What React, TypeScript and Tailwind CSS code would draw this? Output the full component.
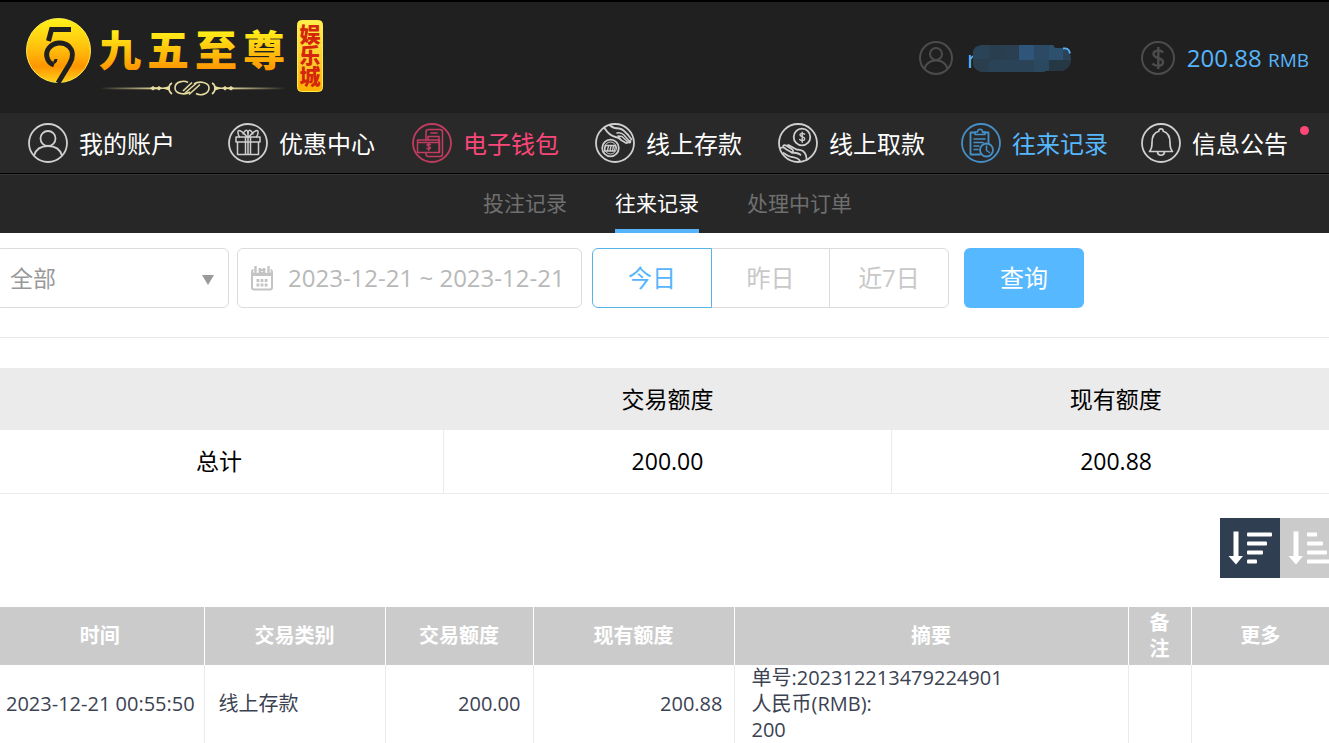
import { useState } from "react";
import type { ReactNode } from "react";
import clsx from "clsx";

function Ring({ children }: { children: ReactNode }) {
  return (
    <svg
      viewBox="0 0 40 40"
      className="size-10 shrink-0"
      fill="none"
      stroke="currentColor"
      strokeWidth="1.5"
      strokeLinecap="round"
      strokeLinejoin="round"
      aria-hidden="true"
    >
      <circle cx="20" cy="20" r="19" strokeWidth="1.8" />
      {children}
    </svg>
  );
}

const UserIcon = () => (
  <Ring>
    <circle cx="20" cy="15.5" r="7.5" strokeWidth="1.8" />
    <path d="M6 32.5c2-6.5 7.500-9.500 14-9.500s12 3 14 9.500" strokeWidth="1.8" />
  </Ring>
);

const GiftIcon = () => (
  <Ring>
    <path d="M8 14h24v5H8zM9.500 19h21v12.500h-21zM17.500 14v17.500M22.500 14v17.500M20 14v17.500" />
    <path d="M19 14c-2-3-6-6.500-8-6.500-1.500 0-1.500 3 .5 6.500M15 11c1-2.500 3-4.500 4-3.500 1 .8 1 3 1 6.500M21 14c2-3 6-6.500 8-6.500 1.500 0 1.500 3-.5 6.500M25 11c-1-2.500-3-4.500-4-3.500-1 .8-1 3-1 6.500" />
  </Ring>
);

const WalletIcon = () => (
  <Ring>
    <path d="M14 17V9c0-1.500 1-2.500 2.500-2.500H28c1.500 0 2.500 1 2.500 2.500v22c0 1.500-1 2.500-2.500 2.500H16.500c-1.500 0-2.500-1-2.500-2.500v-1.500" />
    <path d="M19 10h6M16 17v-3.500h11V29M5.500 17h22v12.500h-22zM5.500 19.500h22" />
    <path d="M18.500 21.500c-1-1-3.500-.8-3.500.6s3.500 1 3.500 2.600-2.500 1.700-3.700.6M16.800 20.500v7" strokeWidth="1.3" />
  </Ring>
);

const DepositIcon = () => (
  <Ring>
    <circle cx="15.500" cy="25" r="8.300" strokeWidth="1.8" />
    <circle cx="15.500" cy="25" r="6" strokeWidth="1" />
    <path d="M10.500 22.500h10l-1 5.500h-10zM13.500 23l-1 4.500M16 23l-1 4.500M18.500 23l-1 4.500" strokeWidth="1.3" />
    <path d="M9.500 5c3 5 6 8 11 9 2 .4 3.500.7 5 2.500M15 2.500c3 2.500 6 3 9 3 4 .2 7 3 12.500 11" strokeWidth="1.8" />
    <path d="M22 10c3-1 5 0 7 2l6.500 7.500M25.500 16.500l-2.500-3.500 4 .5 6.500 6M26 17l5 3c1 .6 2-.2 1.300-1.200M34 19.500c1.500.5 2-.5 1-2" />
  </Ring>
);

const WithdrawIcon = () => (
  <Ring>
    <circle cx="24" cy="14" r="8.300" strokeWidth="1.8" />
    <path d="M26.500 11.300c-1.400-1.500-4.500-1.200-4.500.7s4.700 1.500 4.700 3.700-3.400 2.300-5 .7M24.200 9.200v10" strokeWidth="1.4" />
    <path d="M2.500 25c2-1.500 4-.5 6 1.500l4.500 2.500c2 1 3-1.500 1-2.700L8 22.500c-1.500-1-3.500 0-2.500 1.500M9 22.500l1.500-.5 8 4.500 3 .3c4 .5 7 2.500 7.200 10" strokeWidth="1.8" />
    <path d="M5.500 30c3 1.500 4 3 7 3.700 4 .8 8 .5 9.500 4.500M13.500 29.500c3.500.5 7 .3 9 2.300" strokeWidth="1.8" />
  </Ring>
);

const RecordIcon = () => (
  <Ring>
    <path d="M19 31.500H9.500v-22H14M22 9.500h5.500v11" strokeWidth="1.8" />
    <path d="M14 11.500V9h2.500c.3-3.700 4.800-3.700 5 0H24v2.500zM13 16h11M13 19.500h9M13 23h5M13 26.500h4" />
    <circle cx="25.500" cy="27" r="6.500" strokeWidth="1.8" />
    <path d="M25.500 23v4.500l3 2" />
  </Ring>
);

const BellIcon = () => (
  <Ring>
    <path
      d="M8.500 28.500c2.500-2.500 2.500-5 2.500-9 0-6 2-10 6.800-11.300.1-3 4.300-3 4.400 0C27 9.500 29 13.500 29 19.500c0 4 0 6.500 2.500 9zM16.500 29c.3 4.300 6.700 4.300 7 0"
      strokeWidth="1.7"
    />
  </Ring>
);

const CalendarIcon = () => (
  <svg viewBox="0 0 24 26" className="h-[26px] w-6 shrink-0 text-[#c4c4c4]" fill="none" stroke="currentColor" aria-hidden="true">
    <rect x="2" y="5" width="20" height="19.500" rx="2" strokeWidth="2" />
    <path d="M2 9h20" strokeWidth="4" />
    <path d="M6 1v7M18 1v7" stroke="#fff" strokeWidth="5" />
    <path d="M5.500 1v7M10 3v5M14 3v5M18.500 1v7" strokeWidth="2.400" />
    <path d="M6.500 15.500h11M6.500 20h11" strokeWidth="2.800" strokeDasharray="2.800 1.300" />
  </svg>
);

function SortIcon({ bars }: { bars: number[] }) {
  return (
    <svg viewBox="0 0 60 60" className="size-[60px]" fill="#fff" aria-hidden="true">
      <path d="M13.500 13.500h5V38H23l-7 8.500L8.500 38h5z" />
      {bars.map((w, i) => (
        <rect key={i} x="27" y={14.5 + i * 9} width={w} height="4" rx="1" />
      ))}
    </svg>
  );
}

function Logo() {
  return (
    <svg viewBox="0 0 300 80" className="h-20 w-[300px]" role="img" aria-label="九五至尊娱乐城">
      <defs>
        <linearGradient id="gold" x1="0" y1="0" x2="0" y2="1">
          <stop offset="0" stopColor="#fff21a" />
          <stop offset=".45" stopColor="#ffc20d" />
          <stop offset=".75" stopColor="#ff9500" />
          <stop offset="1" stopColor="#ffd21a" />
        </linearGradient>
        <linearGradient id="glyph" gradientUnits="userSpaceOnUse" x1="0" y1="14" x2="0" y2="54">
          <stop offset="0" stopColor="#fff21a" />
          <stop offset="1" stopColor="#ff9500" />
        </linearGradient>
        <linearGradient id="badge" x1="0" y1="0" x2="0" y2="1">
          <stop offset="0" stopColor="#fff04a" />
          <stop offset=".6" stopColor="#ffc928" />
          <stop offset="1" stopColor="#ffb000" />
        </linearGradient>
        <linearGradient id="rule" x1="0" x2="1">
          <stop offset="0" stopColor="#e6dca0" stopOpacity="0" />
          <stop offset="1" stopColor="#e6dca0" />
        </linearGradient>
        <linearGradient id="ruleEnd" x1="0" x2="1">
          <stop offset="0" stopColor="#e6dca0" />
          <stop offset="1" stopColor="#e6dca0" stopOpacity="0" />
        </linearGradient>
      </defs>
      <circle cx="32.500" cy="34.500" r="32" fill="url(#gold)" stroke="#ffe94a" strokeWidth="1" />
      <path
        d="M45 13.500H25.500L22.500 25M28 49c-8-3-9-12-5-17 5-6 14-6.500 19.500-2 5 4.500 5 11.500 1 18L32 67"
        fill="none"
        stroke="#202020"
        strokeWidth="5"
      />
      <path d="M28 46.500c1.500-1 2-2 2-3.500" fill="none" stroke="#202020" strokeWidth="3" />
      <g fill="url(#glyph)" fontFamily="'Noto Sans CJK SC', sans-serif" fontWeight="900" fontSize="42">
        <text x="73" y="50">九</text>
        <text x="121" y="50">五</text>
        <text x="169" y="50">至</text>
        <text x="217" y="50">尊</text>
      </g>
      <rect x="74" y="71.500" width="58" height="1.800" fill="url(#rule)" />
      <rect x="202" y="71.500" width="58" height="1.800" fill="url(#ruleEnd)" />
      <g fill="none" stroke="#e6dca0" strokeWidth="1.600">
        <path d="M126 72.300h14M190 72.300h14" />
        <path d="M146 67c-4 2-4 8.500 0 11M186 67c4 2 4 8.500 0 11" />
        <path d="M164 76c-5 3.500-15 2-15-4 0-6.500 9-8 13-5.500M168 68c5-3.500 15-2 15 4 0 6.500-9 8-13 5.500" />
        <path d="M159 77l11-9.500M163 78.500l11-10M157 75l9-8.500" />
      </g>
      <path d="M127 70l3 2.300-3 2.300-3-2.300zM133 70l3 2.300-3 2.300-3-2.300zM199 70l3 2.300-3 2.300-3-2.300zM205 70l3 2.300-3 2.300-3-2.300zM136 72.300l8-2.500v5zM196 72.300l-8-2.500v5z" fill="#e6dca0" />
      <rect x="271.500" y="4.500" width="25" height="71" rx="4" fill="url(#badge)" stroke="#ffe94a" />
      <text
        x="284"
        y="8"
        fill="#d4260c"
        fontFamily="'Noto Sans CJK SC', sans-serif"
        fontWeight="900"
        fontSize="21"
        style={{ writingMode: "vertical-rl" }}
      >
        娱乐城
      </text>
    </svg>
  );
}

// blocks that cover the account name
function MaskedName() {
  return (
    <svg viewBox="0 0 100 30" className="-ml-1 h-[30px] w-[100px]" aria-hidden="true">
      <clipPath id="mask">
        <path d="M8 1h72l2 3h7q9 2 9 11t-9 12H72v1H8q-8-3-8-9V9q0-7 8-8z" />
      </clipPath>
      <g clipPath="url(#mask)">
        <rect width="100" height="30" fill="#2b4356" />
        <rect x="0" y="15" width="16" height="15" fill="#2b3e4d" />
        <rect x="16" y="0" width="15" height="16" fill="#293f50" />
        <rect x="31" y="0" width="15" height="16" fill="#2a4052" />
        <rect x="46" y="1" width="15" height="15" fill="#30557a" />
        <rect x="61" y="0" width="15" height="16" fill="#2c4a63" />
        <rect x="76" y="0" width="14" height="16" fill="#2d506f" />
        <rect x="61" y="16" width="15" height="14" fill="#2a4860" />
        <rect x="76" y="16" width="24" height="14" fill="#273845" />
      </g>
      <path d="M90 4.500q6-1 7 5" fill="none" stroke="#56b4fc" strokeWidth="1.800" />
    </svg>
  );
}

const navItems = [
  { label: "我的账户", icon: <UserIcon />, text: "text-white", tint: "text-[#cfcfcf]" },
  { label: "优惠中心", icon: <GiftIcon />, text: "text-white", tint: "text-[#cfcfcf]" },
  { label: "电子钱包", icon: <WalletIcon />, text: "text-[#f9477a]", tint: "text-[#c23c62]" },
  { label: "线上存款", icon: <DepositIcon />, text: "text-white", tint: "text-[#cfcfcf]" },
  { label: "线上取款", icon: <WithdrawIcon />, text: "text-white", tint: "text-[#cfcfcf]" },
  { label: "往来记录", icon: <RecordIcon />, text: "text-[#56b8ff]", tint: "text-[#4590c8]" },
  { label: "信息公告", icon: <BellIcon />, text: "text-white", tint: "text-[#cfcfcf]", dot: true },
];

const tabs = ["投注记录", "往来记录", "处理中订单"];
const ranges = ["今日", "昨日", "近7日"];

export default function App() {
  const [tab, setTab] = useState("往来记录");
  const [range, setRange] = useState("今日");
  const [date, setDate] = useState("2023-12-21 ~ 2023-12-21");
  const [desc, setDesc] = useState(true);

  return (
    <div className="h-screen overflow-hidden bg-white font-['Open_Sans','Noto_Sans_CJK_SC',sans-serif] text-black">
      <header className="flex h-[113px] items-center justify-between border-t-2 border-black bg-[#202020] pr-5 pl-[26px]">
        <a href="#home" className="pb-1">
          <Logo />
        </a>
        <div className="flex items-center text-2xl text-[#56b4fc]">
          <span className="text-[#4c4c4c]">
            <svg viewBox="0 0 34 34" className="size-[34px]" fill="none" stroke="currentColor" strokeWidth="2" aria-hidden="true">
              <circle cx="17" cy="17" r="16" />
              <circle cx="17" cy="13" r="6" />
              <path d="M5.500 28c1.500-5.500 6-8.500 11.500-8.500s10 3 11.500 8.500" />
            </svg>
          </span>
          <span className="ml-3.5 flex items-center pt-0.5 leading-8">
            r
            <MaskedName />
          </span>
          <span className="ml-[68px] text-[#4c4c4c]">
            <svg viewBox="0 0 34 34" className="size-[34px]" fill="none" stroke="currentColor" strokeWidth="2" aria-hidden="true">
              <circle cx="17" cy="17" r="16" />
              <path d="M22 11.500c-2.500-3-9.500-2.500-9.500 1.500 0 5 9.500 3 9.500 8 0 4.500-7.500 5-10.500 1.500M17.300 6v22" strokeWidth="2.400" />
            </svg>
          </span>
          <span className="ml-3 pt-0.5 leading-8">
            200.88 <span className="text-[19px]">RMB</span>
          </span>
        </div>
      </header>

      <nav className="grid h-[61px] grid-cols-[200fr_184fr_183fr_183fr_183fr_180fr_188fr] items-center border-b border-black bg-[#292929] pl-7">
        {navItems.map((item) => (
          <a key={item.label} href="#nav" className={clsx("relative flex items-center gap-[11px] text-2xl leading-10 whitespace-nowrap", item.text)}>
            <span className={item.tint}>{item.icon}</span>
            <span className="pt-0.5">{item.label}</span>
            {item.dot && <span className="absolute top-1 left-[159px] size-[9px] rounded-full bg-[#ff4777]" />}
          </a>
        ))}
      </nav>

      <div className="flex h-[59px] justify-center gap-12 border-t border-[#363636] bg-[#272727] pl-1.5">
        {tabs.map((name) => (
          <button
            key={name}
            type="button"
            onClick={() => setTab(name)}
            className={clsx(
              "border-b-4 pt-1 text-[21px]",
              tab === name ? "border-[#56b4fc] text-white" : "border-transparent text-[#6f6f6f]"
            )}
          >
            {name}
          </button>
        ))}
      </div>

      <form className="flex items-start border-b border-[#e8e8e8] pt-[15px] pb-[29px]" onSubmit={(e) => e.preventDefault()}>
        <div className="relative -ml-1 w-[233px]">
          <select aria-label="交易类别" className="h-[60px] w-full appearance-none rounded-md border border-[#dcdcdc] bg-white pl-[13px] text-[23px] text-[#999]">
            <option>全部</option>
            <option>线上存款</option>
            <option>线上取款</option>
          </select>
          <svg viewBox="0 0 12 10" className="pointer-events-none absolute top-[27px] right-[15px] h-2.5 w-3" fill="#999" aria-hidden="true">
            <path d="M0 0h12L6 10z" />
          </svg>
        </div>
        <label className="ml-2 flex h-[60px] w-[345px] items-center gap-3.5 rounded-md border border-[#dcdcdc] pl-3">
          <CalendarIcon />
          <input
            type="text"
            aria-label="日期"
            value={date}
            onChange={(e) => setDate(e.target.value)}
            className="w-full min-w-0 text-2xl text-[#b8b8b8] outline-none"
          />
        </label>
        <div className="ml-2.5 flex h-[60px] text-2xl">
          {ranges.map((name) => (
            <button
              key={name}
              type="button"
              onClick={() => setRange(name)}
              className={clsx(
                "-ml-px w-[119px] border first:ml-0 first:w-[120px] first:rounded-l-md last:w-[120px] last:rounded-r-md",
                range === name ? "z-10 border-[#56b4e8] text-[#56b4fc]" : "border-[#dcdcdc] text-[#c8c8c8]"
              )}
            >
              {name}
            </button>
          ))}
        </div>
        <button type="submit" className="ml-[15px] h-[60px] w-[120px] rounded-md bg-[#56b8ff] text-2xl text-white">
          查询
        </button>
      </form>

      <table className="mt-[30px] -ml-[5px] w-[calc(100%+16px)] table-fixed text-center text-[23px]">
        <thead>
          <tr className="h-[62px] bg-[#ebebeb]">
            <td />
            <th scope="col" className="font-normal">交易额度</th>
            <th scope="col" className="font-normal">现有额度</th>
          </tr>
        </thead>
        <tbody>
          <tr className="h-[63px] border-b border-[#ebebeb]">
            <th scope="row" className="border-r border-[#ebebeb] font-normal">总计</th>
            <td className="border-r border-[#ebebeb]">200.00</td>
            <td>200.88</td>
          </tr>
        </tbody>
      </table>

      <div className="mt-6 -mr-[11px] flex justify-end">
        <button type="button" aria-label="降序" onClick={() => setDesc(true)} className={desc ? "bg-[#303e51]" : "bg-[#cbcbcb]"}>
          <SortIcon bars={[25, 20, 16, 10]} />
        </button>
        <button type="button" aria-label="升序" onClick={() => setDesc(false)} className={desc ? "bg-[#cbcbcb]" : "bg-[#303e51]"}>
          <SortIcon bars={[10, 16, 20, 25]} />
        </button>
      </div>

      <table className="mt-[29px] -ml-1 w-[calc(100%+4px)] table-fixed text-xl leading-[26px] text-[#3b4252]">
        <colgroup>
          <col className="w-[208px]" />
          <col className="w-[181px]" />
          <col className="w-[148px]" />
          <col className="w-[201px]" />
          <col />
          <col className="w-[63px]" />
          <col className="w-[138px]" />
        </colgroup>
        <thead>
          <tr className="h-[58px] bg-[#cbcbcb] text-white">
            {["时间", "交易类别", "交易额度", "现有额度", "摘要", "备注", "更多"].map((name) => (
              <th key={name} scope="col" className="border-r border-white px-3.5 font-bold last:border-r-0">
                {name}
              </th>
            ))}
          </tr>
        </thead>
        <tbody>
          <tr className="*:border-r *:border-[#ebebeb] *:last:border-r-0">
            <td className="pl-2.5 whitespace-nowrap">2023-12-21 00:55:50</td>
            <td className="pl-3.5">线上存款</td>
            <td className="pr-3 text-right">200.00</td>
            <td className="pr-[11px] text-right">200.88</td>
            <td className="pl-[17px]">
              单号:202312213479224901
              <br />
              人民币(RMB):
              <br />
              200
            </td>
            <td />
            <td />
          </tr>
        </tbody>
      </table>
    </div>
  );
}
